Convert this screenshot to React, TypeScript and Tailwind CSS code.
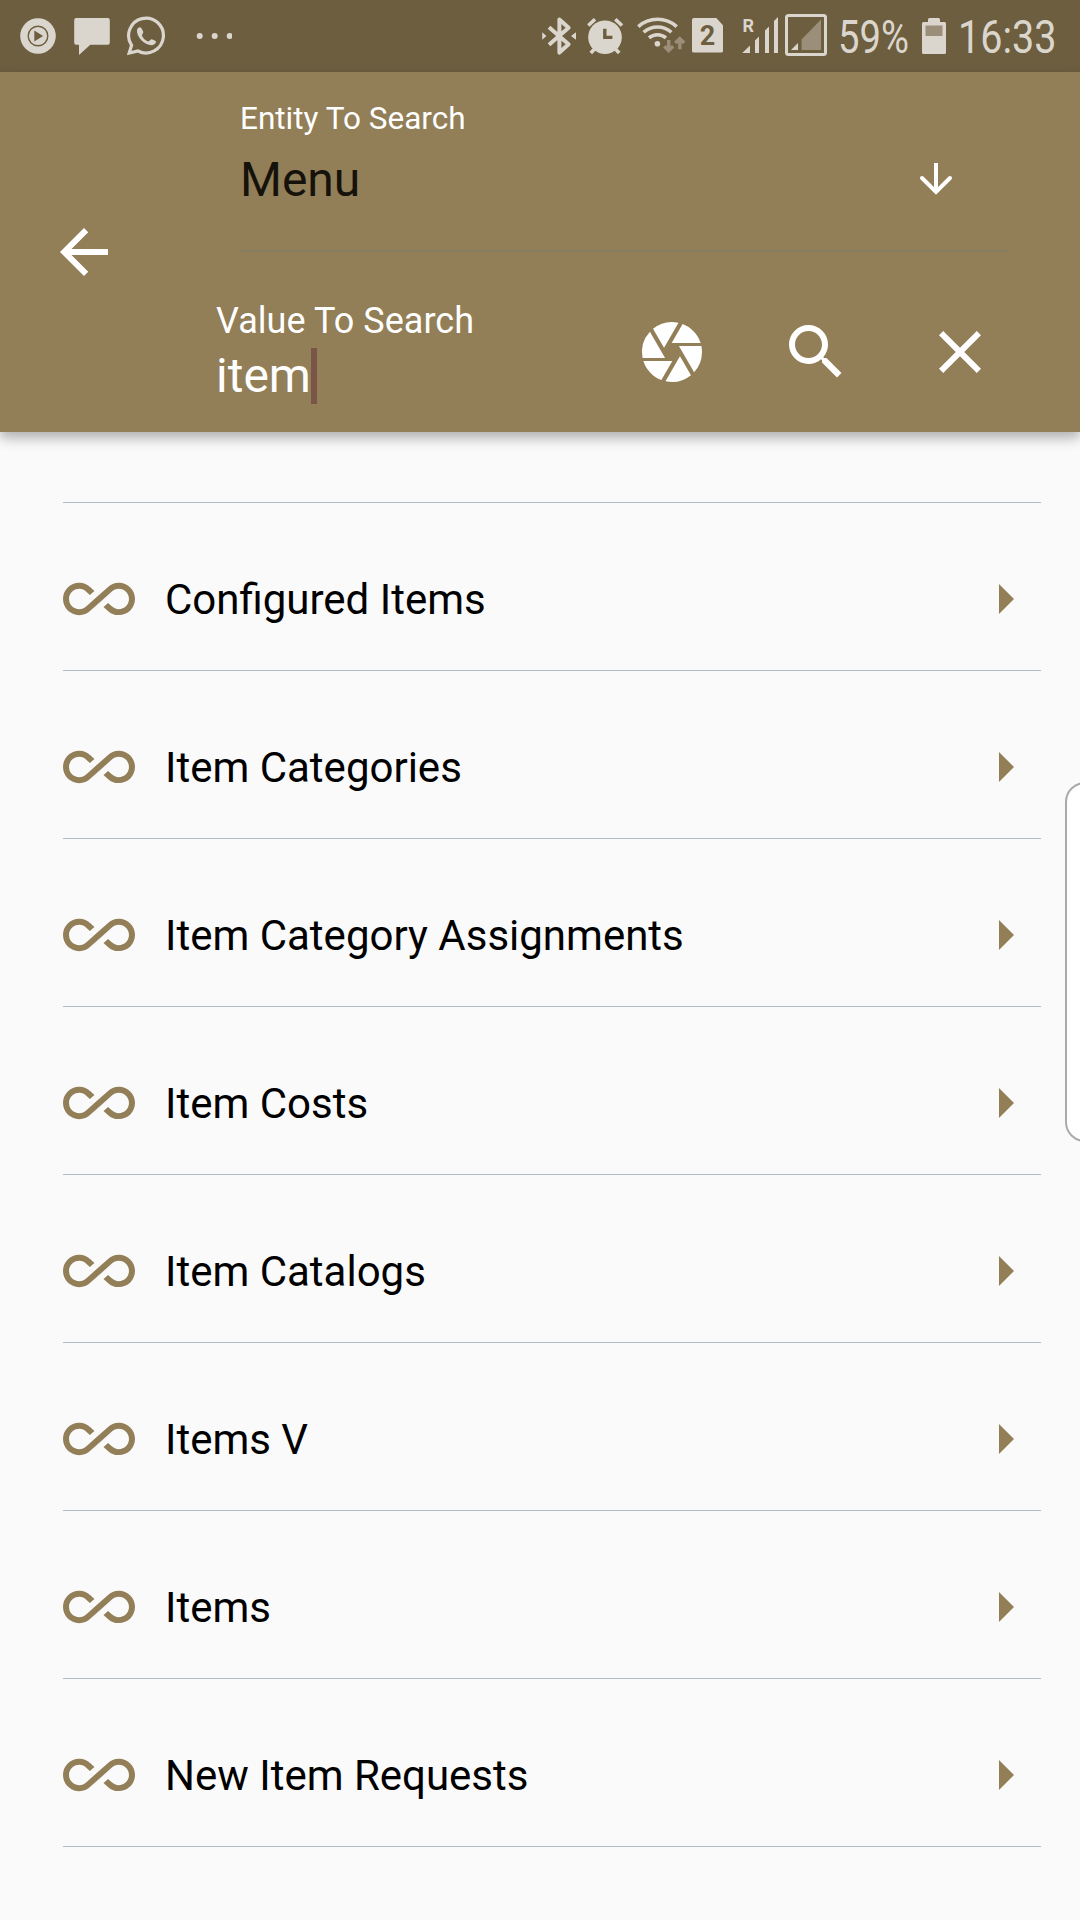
import React from "react";
import {
  MdAllInclusive,
  MdArrowBack,
  MdCamera,
  MdClose,
  MdSearch,
} from "react-icons/md";

const items = [
  "Configured Items",
  "Item Categories",
  "Item Category Assignments",
  "Item Costs",
  "Item Catalogs",
  "Items V",
  "Items",
  "New Item Requests",
];

function StatusBar() {
  return (
    <div className="flex h-[72px] w-full shrink-0 items-center bg-[#6d5e3f] text-[#dbd6cd]">
      <svg className="ml-5 h-9 w-9 shrink-0" viewBox="0 0 36 36" fill="none">
        <circle cx="18" cy="18" r="17.8" fill="#dbd6cd" />
        <circle cx="18" cy="18" r="9.8" stroke="#6d5e3f" strokeWidth="1.4" />
        <path d="M14.3 12.6v10.8l8.8-5.4z" fill="#6d5e3f" />
      </svg>
      <svg className="ml-[18px] h-[38px] w-9 shrink-0" viewBox="0 0 36 38" fill="currentColor">
        <path d="M2.2 1h31.6a2 2 0 0 1 2 2v22.8a2 2 0 0 1-2 2H16.3L5 38V27.8H2.2a2 2 0 0 1-2-2V3a2 2 0 0 1 2-2z" />
      </svg>
      <svg className="ml-4 h-10 w-10 shrink-0" viewBox="126 16 40 40" fill="currentColor">
        <path
          d="M129.2 53 131.6 45.3A17.4 17.4 0 1 1 138 51z"
          fill="none"
          stroke="currentColor"
          strokeWidth="3.2"
        />
        <path d="M137 30C137 28 140 26 141.3 28L143.2 31.5C143.8 33.3 141.6 34.3 142 35.8C143 38.3 145.5 40.6 148 41.4C149.6 41.6 150.3 39.2 151.8 39.2L155.3 40.8C157.2 42.2 154.6 45 152 45.2C145 45.6 136.2 37 137 30z" />
      </svg>
      <svg className="ml-[30px] h-[6px] w-9 shrink-0" viewBox="0 0 36 6" fill="currentColor">
        <circle cx="3.7" cy="3" r="3" />
        <circle cx="18.7" cy="3" r="3" />
        <circle cx="33.7" cy="3" r="3" />
      </svg>
      <svg className="ml-[310px] h-10 w-9 shrink-0" viewBox="542 16 36 40" fill="currentColor">
        <path
          d="M549 27.2 568.6 44.2 559.4 52.6V19.4L568.6 27.8 549 44.8"
          fill="none"
          stroke="currentColor"
          strokeWidth="4"
          strokeLinejoin="round"
        />
        <path d="M542.2 32.3 546.4 36 542.2 39.7zM576 32.3 571 36 576 39.7z" />
      </svg>
      <svg className="ml-2 h-10 w-[38px] shrink-0" viewBox="586 16 38 40" fill="currentColor">
        <circle cx="605" cy="37.2" r="16.8" />
        <path
          d="M588.3 25.5 595 19.2M622 25.5 615.3 19.2M590.8 53 595 48.5M619.2 53 615 48.5"
          stroke="currentColor"
          strokeWidth="3.6"
        />
        <path d="M604.8 28.7V37.4H612.4" fill="none" stroke="#6d5e3f" strokeWidth="3.4" />
      </svg>
      <svg className="ml-3 h-10 w-[50px] shrink-0" viewBox="636 16 50 40" fill="none">
        <g stroke="#dbd6cd" strokeWidth="3.5">
          <path d="M638.3 26.6A29 29 0 0 1 676.7 26.6" />
          <path d="M643.6 32.2A21 21 0 0 1 671.4 32.2" />
          <path d="M649 37.9A13 13 0 0 1 666 37.9" />
        </g>
        <circle cx="657.4" cy="43.7" r="2.8" fill="#dbd6cd" />
        <g stroke="#9b8f79" strokeWidth="3.4">
          <path d="M668.7 40V50M664.3 46.3 668.7 50.7 673.1 46.3" />
          <path d="M679.8 49.3V39M675.4 43 679.8 38.6 684.2 43" />
        </g>
      </svg>
      <div className="mb-[2px] ml-[6px] flex h-[35px] w-[31px] shrink-0 items-center justify-center rounded-[2px] bg-[#dbd6cd] pt-[3px] text-[27px] leading-none font-bold text-[#6d5e3f] [clip-path:polygon(0_0,77%_0,100%_22%,100%_100%,0_100%)]">
        2
      </div>
      <svg className="ml-[18px] h-10 w-[38px] shrink-0" viewBox="741 16 38 40" fill="currentColor">
        <path d="M742.3 53 750 45.5V53zM755 53V40.6L759 36.6V53zM765 53V30.4L769 26.4V53zM774 53V21L778 17V53z" />
        <text x="742.6" y="32.3" fontSize="18" fontWeight="700" fontFamily="Roboto" textLength="11.5" lengthAdjust="spacingAndGlyphs">
          R
        </text>
      </svg>
      <svg className="mb-[2px] ml-[6px] h-[42px] w-[42px] shrink-0" viewBox="785 14 42 42" fill="none">
        <rect x="786.5" y="15.5" width="39" height="39" rx="2" stroke="#dbd6cd" strokeWidth="3" />
        <path d="M791 50 798 43V50z" fill="#dbd6cd" />
        <path d="M801.6 50V39.5L821 19.5V50z" fill="#9b8f79" />
      </svg>
      <div className="ml-[11px] w-[71px] shrink-0 pt-[2px]">
        <span className="inline-block origin-left scale-x-[0.83] text-[46px] leading-[52px] whitespace-nowrap">59%</span>
      </div>
      <svg className="ml-[13px] h-9 w-6 shrink-0" viewBox="0 0 24 36" fill="currentColor">
        <path d="M6 1.5a1.5 1.5 0 0 1 1.5-1.5h9a1.5 1.5 0 0 1 1.5 1.5V4h4.5a1.5 1.5 0 0 1 1.5 1.5v29a1.5 1.5 0 0 1-1.5 1.5h-21A1.5 1.5 0 0 1 0 34.5v-29A1.5 1.5 0 0 1 1.5 4H6z" />
        <path d="M3.5 7.500h17v10.500h-17z" fill="#9b8f79" />
      </svg>
      <div className="ml-[12px] w-[100px] shrink-0 pt-[2px]">
        <span className="inline-block origin-left scale-x-[0.86] text-[46px] leading-[52px] whitespace-nowrap">16:33</span>
      </div>
    </div>
  );
}

function AppBar() {
  return (
    <header className="z-10 flex h-[360px] shrink-0 items-center bg-[#927e57] text-white shadow-[0_6px_12px_rgba(0,0,0,0.3)]">
      <MdArrowBack className="ml-12 size-[72px] shrink-0" />
      <div className="ml-24 flex h-full flex-1 flex-col">
        <div className="ml-6 flex h-[180px] w-[768px] shrink-0 border-b-2 border-[#867e61]">
          <div className="flex flex-1 flex-col pt-[27px]">
            <span className="text-[31.5px] leading-10">Entity To Search</span>
            <span className="mt-[12px] text-[48px] leading-[58px] text-[#15120c]">Menu</span>
          </div>
          <svg
            className="mt-[90px] mr-[55px] h-[34px] w-[34px]"
            viewBox="0 0 34 34"
            fill="none"
            stroke="currentColor"
            strokeWidth="4"
          >
            <path d="M17 1v30" />
            <path d="M3 16 17 30 31 16" strokeLinecap="round" />
          </svg>
        </div>
        <div className="flex flex-1">
          <div className="w-[420px] pt-[46px]">
            <div className="text-[36px] leading-[46px] tracking-[0.05px]">Value To Search</div>
            <div className="mt-1 flex items-center">
              <span className="text-[48px] leading-[56px]">item</span>
              <span className="h-14 w-[6px] bg-[#795548]" />
            </div>
          </div>
          <div className="flex gap-[72px] pt-16">
            <MdCamera className="size-[72px]" />
            <MdSearch className="size-[72px]" />
            <MdClose className="size-[72px]" />
          </div>
        </div>
      </div>
    </header>
  );
}

function Row({ label }: { label: string }) {
  return (
    <li className="flex h-[168px] items-center border-b border-[#b4bdc4] pt-[25px]">
      <MdAllInclusive className="size-[72px] text-[#927e57]" />
      <span className="ml-[30px] flex-1 pt-[2px] text-[42px] leading-[50px] text-black">{label}</span>
      <svg className="mr-[27px] h-[30px] w-[15px]" viewBox="0 0 15 30" fill="#927e57">
        <path d="M0 0v30l15-15z" />
      </svg>
    </li>
  );
}

export default function App() {
  return (
    <div className="relative flex h-[1920px] w-[1080px] flex-col overflow-hidden bg-[#fafafa] font-[Roboto,sans-serif]">
      <StatusBar />
      <AppBar />
      <ul className="mt-[70px] mr-[39px] ml-[63px] border-t border-[#b4bdc4]">
        {items.map((label) => (
          <Row key={label} label={label} />
        ))}
      </ul>
      <div className="absolute top-[782px] right-0 h-[360px] w-[15px] overflow-hidden">
        <div className="h-full w-12 rounded-[20px] border-2 border-[#aaaaaa] bg-white" />
      </div>
    </div>
  );
}
